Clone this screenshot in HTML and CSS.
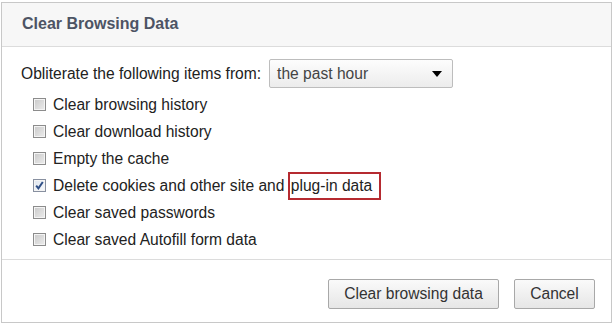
FILE: index.html
```html
<!DOCTYPE html>
<html>
<head>
<meta charset="utf-8">
<link rel="stylesheet" href="styles.css">
</head>
<body>
<div class="dialog">
  <div class="header">Clear Browsing Data</div>
  <div class="content">
    <div class="period">
      <span>Obliterate the following items from:</span>
      <div class="select"><span>the past hour</span><span class="arrow"></span></div>
    </div>
    <ul class="options">
      <li><span class="cb"></span>Clear browsing history</li>
      <li><span class="cb"></span>Clear download history</li>
      <li><span class="cb"></span>Empty the cache</li>
      <li><span class="cb checked"><svg viewBox="0 0 13 13" width="13" height="13"><path d="M3.2 6.6 L5.4 9.4 L9.8 3" fill="none" stroke="#2f4f86" stroke-width="2"/></svg></span>Delete cookies and other site and <span class="hl">plug-in data</span></li>
      <li><span class="cb"></span>Clear saved passwords</li>
      <li><span class="cb"></span>Clear saved Autofill form data</li>
    </ul>
  </div>
  <div class="footer">
    <button class="btn primary">Clear browsing data</button>
    <button class="btn cancel">Cancel</button>
  </div>
</div>
</body>
</html>
```
FILE: styles.css
```css
html, body { margin: 0; padding: 0; background: #fff; }
body {
  width: 616px; height: 327px;
  padding: 2px 4px 4px 1px;
  box-sizing: border-box;
  font-family: "Liberation Sans", Arial, sans-serif;
  font-size: 15.6px;
  color: #222;
}
.dialog {
  border: 1px solid #c8c8c8;
  height: 100%;
  box-sizing: border-box;
  display: flex;
  flex-direction: column;
}
.header {
  height: 42px;
  border-bottom: 1px solid #dcdcdc;
  background: #f7f7f7;
  padding-left: 20px;
  font-weight: bold;
  font-size: 16px;
  color: #4d5464;
  display: flex;
  align-items: center;
  padding-bottom: 1px;
}
.content {
  flex: 1;
  padding: 12px 0 0 19px;
  border-bottom: 1px solid #dcdcdc;
}
.period {
  display: flex;
  align-items: center;
  gap: 8px;
  height: 29px;
}
.select {
  border: 1px solid #bdbdbd;
  border-radius: 2px;
  background: linear-gradient(#fdfdfd, #ececec);
  display: flex;
  align-items: center;
  justify-content: space-between;
  padding: 0 10px 0 7px;
  box-sizing: border-box;
  width: 184px;
  height: 29px;
  color: #444;
}
.arrow {
  width: 0; height: 0;
  border-left: 5px solid transparent;
  border-right: 5px solid transparent;
  border-top: 6px solid #000;
}
.options {
  list-style: none;
  margin: 3px 0 0 0;
  padding: 0 0 0 12px;
}
.options li {
  height: 27px;
  display: flex;
  align-items: center;
  white-space: pre;
}
.cb {
  width: 13px; height: 13px;
  box-sizing: border-box;
  border: 1px solid #8c8c8c;
  background: linear-gradient(135deg, #c9c9c9, #ececec);
  box-shadow: inset 1px 1px 0 #f4f4f4, inset -1px -1px 0 #f4f4f4;
  margin-right: 7px;
  display: inline-block;
  position: relative;
}
.cb.checked {
  background: linear-gradient(135deg, #dfe6f0, #f6f8fb);
  border-color: #8890a0;
}
.cb svg { position: absolute; left: -1px; top: -1px; }
.hl {
  outline: 2px solid #b52a30;
  outline-offset: 0;
  padding: 3px 7px 3px 1px;
  margin-left: 1px;
}
.footer {
  height: 62px;
  display: flex;
  justify-content: flex-end;
  align-items: flex-start;
  padding: 19px 16px 0 0;
  box-sizing: border-box;
  gap: 15px;
}
.btn {
  font-family: "Liberation Sans", Arial, sans-serif;
  font-size: 15.6px;
  color: #333;
  height: 30px;
  border: 1px solid #a8a8a8;
  border-radius: 2px;
  background: linear-gradient(#fafafa, #e6e6e6);
  padding: 0;
}
.primary { width: 171px; }
.cancel { width: 81px; }
```
